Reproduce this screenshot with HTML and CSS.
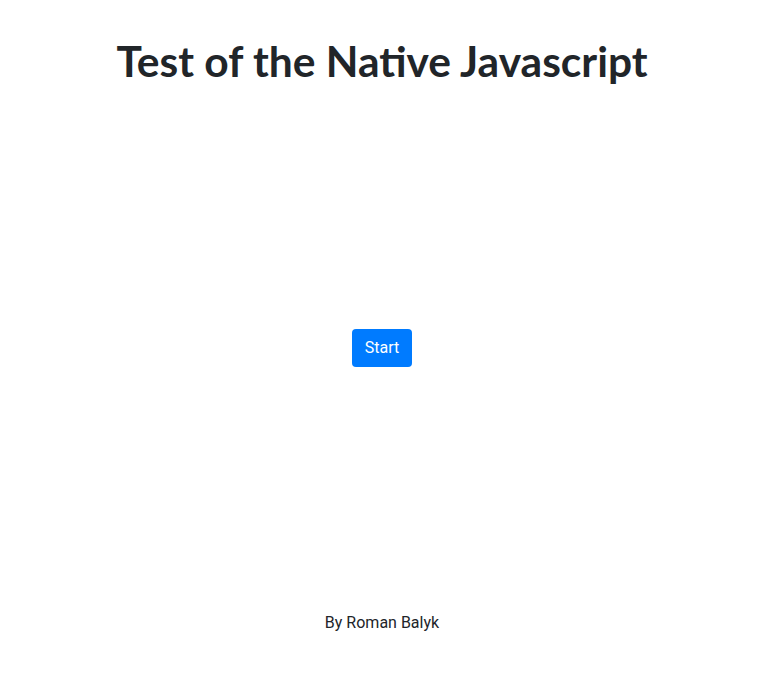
FILE: index.html
```html
<!DOCTYPE html>
<html>
<head>
<meta charset="utf-8">
<link rel="stylesheet" href="styles.css">
</head>
<body>
<div class="page">
  <header class="header">
    <h1 class="title">Test of the Native Javascript</h1>
  </header>
  <main class="main">
    <button class="btn">Start</button>
  </main>
  <footer class="footer">By Roman Balyk</footer>
</div>
</body>
</html>
```
FILE: styles.css
```css
html, body {
  margin: 0;
  padding: 0;
  background: #fff;
}
body {
  font-family: Roboto, "Liberation Sans", sans-serif;
  font-size: 16px;
  color: #212529;
}
.page {
  width: 764px;
  height: 685px;
  display: flex;
  flex-direction: column;
  align-items: center;
}
.header {
  padding-top: 35px;
}
.title {
  margin: 0;
  font-family: Lato, sans-serif;
  font-weight: 700;
  font-size: 42.5px;
  line-height: 52px;
  color: #212529;
}
.main {
  flex: 1;
  display: flex;
  align-items: center;
  justify-content: center;
  padding-bottom: 2px;
}
.btn {
  font-family: Roboto, sans-serif;
  font-size: 16px;
  line-height: 24px;
  padding: 7px 13px;
  color: #fff;
  background: #007bff;
  border: 0;
  border-radius: 4px;
}
.footer {
  padding-bottom: 50px;
  line-height: 24px;
}
```
